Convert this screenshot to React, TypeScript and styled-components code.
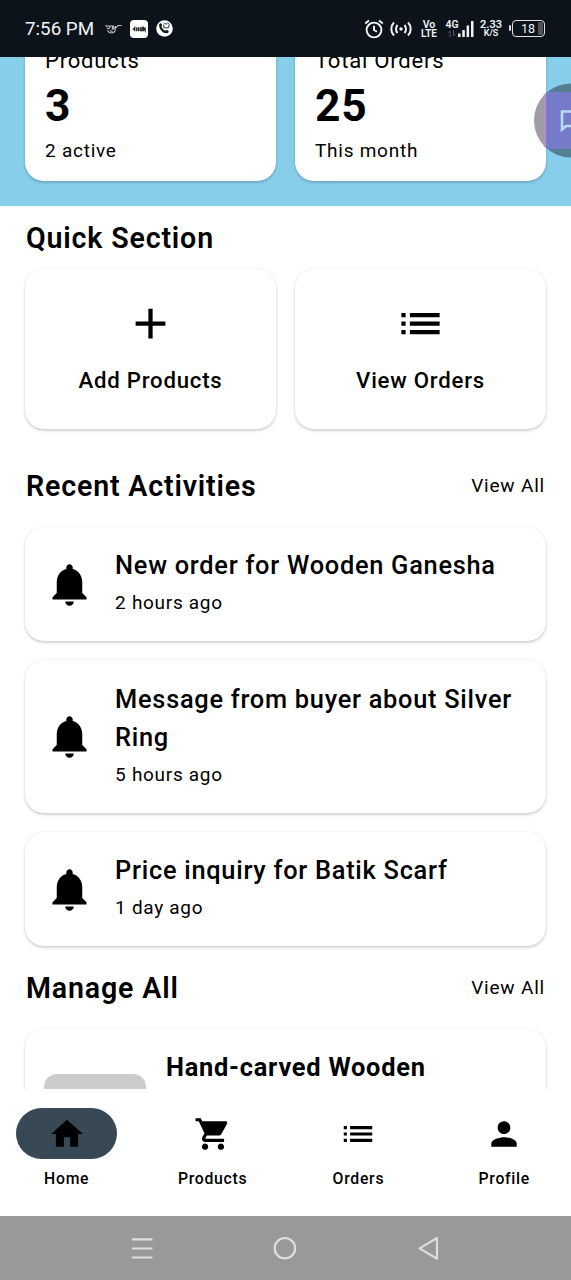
import React from 'react';
import styled, { createGlobalStyle } from 'styled-components';

const Global = createGlobalStyle`
  *, *::before, *::after { box-sizing: border-box; }
  html, body { margin: 0; padding: 0; }
  body { background: #fff; }
`;

const Screen = styled.div`
  width: 571px;
  height: 1280px;
  display: flex;
  flex-direction: column;
  position: relative;
  overflow: hidden;
  background: #fff;
  color: #000;
  font-family: Roboto, 'Liberation Sans', sans-serif;
`;

const StatusBar = styled.header`
  flex: none;
  height: 57px;
  padding: 0 26px 0 25px;
  display: flex;
  align-items: center;
  background: #0c131a;
  color: #f1f4f6;
`;

const Clock = styled.span`
  font-size: 18.8px;
  line-height: 22px;
  width: 80px;
  padding-top: 1px;
  white-space: nowrap;
`;

const StatusIcon = styled.svg<{ $gap?: number }>`
  flex: none;
  display: block;
  margin-left: ${(p) => p.$gap ?? 0}px;
`;

const Spacer = styled.div`
  flex: 1;
`;

const TinyStack = styled.div<{ $gap: number; $width: number }>`
  width: ${(p) => p.$width}px;
  margin-left: ${(p) => p.$gap}px;
  padding-top: 1px;
  display: flex;
  flex-direction: column;
  align-items: center;
  white-space: nowrap;
`;

const Tiny = styled.span<{ $size: number }>`
  font-size: ${(p) => p.$size}px;
  line-height: 9.5px;
  font-weight: 600;
`;

const Battery = styled.div`
  position: relative;
  width: 33px;
  height: 17px;
  margin-left: 10px;
  padding-left: 8px;
  display: flex;
  align-items: center;
  border: 1.5px solid #dfe2e4;
  border-radius: 4px;
  font-size: 12.5px;
  line-height: 14px;

  &::before {
    content: '';
    position: absolute;
    left: -4px;
    top: 4px;
    width: 2px;
    height: 6px;
    border-radius: 1px;
    background: #dfe2e4;
  }

  &::after {
    content: '';
    position: absolute;
    right: 1px;
    top: 1px;
    width: 5px;
    bottom: 1px;
    border-radius: 1px;
    background: #4c5258;
  }
`;

const Content = styled.main`
  flex: none;
  height: 1032px;
  overflow: hidden;
`;

const Summary = styled.section`
  height: 149px;
  padding: 0 25px 25px;
  display: flex;
  align-items: flex-end;
  gap: 19px;
  background: #87ceeb;
  overflow: hidden;
`;

const Card = styled.div`
  background: #fff;
  border-radius: 19px;
  box-shadow: 0 2px 3px rgba(0, 0, 0, 0.16), 0 0 3px rgba(0, 0, 0, 0.08);
`;

const StatCard = styled(Card)`
  flex: 1;
  height: 178px;
  padding: 0 20px 11px;
  display: flex;
  flex-direction: column;
  justify-content: flex-end;
`;

const StatLabel = styled.div`
  margin-bottom: 1px;
  font-size: 22.1px;
  line-height: 38px;
  letter-spacing: 0.75px;
`;

const StatValue = styled.div`
  font-size: 44.4px;
  line-height: 52px;
  font-weight: 700;
  letter-spacing: 0.8px;
`;

const StatNote = styled.div`
  font-size: 19px;
  line-height: 38px;
  letter-spacing: 0.75px;
`;

const SectionHead = styled.div<{ $top: number; $bottom: number }>`
  margin-top: ${(p) => p.$top}px;
  margin-bottom: ${(p) => p.$bottom}px;
  padding: 0 26px;
  height: 38px;
  display: flex;
  align-items: center;
  justify-content: space-between;
`;

const SectionTitle = styled.h2`
  margin: 0;
  font-size: 28.6px;
  line-height: 38px;
  font-weight: 600;
  letter-spacing: 0.83px;
`;

const SectionLink = styled.a`
  font-size: 19px;
  line-height: 38px;
  letter-spacing: 0.8px;
`;

const QuickRow = styled.div`
  padding: 0 25px;
  display: flex;
  gap: 19px;
`;

const QuickCard = styled(Card)`
  flex: 1;
  height: 160px;
  padding: 29px 0 30px;
  display: flex;
  flex-direction: column;
  align-items: center;
  justify-content: space-between;
`;

const QuickLabel = styled.div`
  font-size: 22.2px;
  line-height: 38px;
  font-weight: 500;
  letter-spacing: 0.77px;
`;

const ActivityList = styled.div`
  padding: 0 25px;
  display: flex;
  flex-direction: column;
  gap: 19.1px;
`;

const ActivityCard = styled(Card)`
  padding: 19.1px;
  display: flex;
  align-items: center;
  gap: 20px;
`;

const ActivityTitle = styled.div`
  font-size: 25.4px;
  line-height: 38.1px;
  font-weight: 500;
  letter-spacing: 0.72px;
`;

const ActivityTime = styled.div`
  font-size: 19px;
  line-height: 38.1px;
  letter-spacing: 0.7px;
`;

const ProductCard = styled(Card)`
  height: 180px;
  margin: 0 25px;
  padding: 19px;
  display: flex;
  gap: 20px;
`;

const Thumb = styled.div`
  width: 102px;
  height: 102px;
  margin-top: 26px;
  border-radius: 13px;
  background: #ccc;
`;

const ProductTitle = styled.div`
  font-size: 25.4px;
  line-height: 38px;
  font-weight: 700;
  letter-spacing: 0.75px;
`;

const TabBar = styled.nav`
  flex: none;
  height: 127px;
  padding: 19px 16px 0;
  display: flex;
  justify-content: space-between;
  background: #fff;
`;

const Tab = styled.div`
  width: 101.4px;
  display: flex;
  flex-direction: column;
  align-items: center;
`;

const TabPill = styled.div<{ $active?: boolean }>`
  width: 101.4px;
  height: 51px;
  display: flex;
  align-items: center;
  justify-content: center;
  border-radius: 26px;
  background: ${(p) => (p.$active ? '#384955' : 'transparent')};
`;

const TabLabel = styled.div`
  margin-top: 7px;
  font-size: 15.8px;
  line-height: 25px;
  font-weight: 500;
  letter-spacing: 0.7px;
`;

const SystemBar = styled.footer`
  flex: none;
  height: 64px;
  padding: 0 131px 0 130px;
  display: flex;
  align-items: center;
  justify-content: space-between;
  background: #999;
`;

const ChatBubble = styled.svg`
  position: absolute;
  left: 533px;
  top: 83px;
`;

const PATHS = {
  plus: 'M19 13h-6v6h-2v-6H5v-2h6V5h2v6h6v2z',
  list: 'M3 13h2v-2H3v2zm0 4h2v-2H3v2zm0-8h2V7H3v2zm4 4h14v-2H7v2zm0 4h14v-2H7v2zM7 7v2h14V7H7z',
  bell: 'M12 22c1.1 0 2-.9 2-2h-4c0 1.1.89 2 2 2zm6-6v-5c0-3.07-1.64-5.64-4.5-6.32V4c0-.83-.67-1.5-1.5-1.5s-1.5.67-1.5 1.5v.68C7.63 5.36 6 7.92 6 11v5l-2 2v1h16v-1l-2-2z',
  home: 'M10 20v-6h4v6h5v-8h3L12 3 2 12h3v8z',
  cart: 'M7 18c-1.1 0-1.99.9-1.99 2S5.9 22 7 22s2-.9 2-2-.9-2-2-2zM1 2v2h2l3.6 7.59-1.35 2.45c-.16.28-.25.61-.25.96 0 1.1.9 2 2 2h12v-2H7.42c-.14 0-.25-.11-.25-.25l.03-.12.9-1.63h7.45c.75 0 1.41-.41 1.75-1.03l3.58-6.49c.08-.14.12-.31.12-.48 0-.55-.45-1-1-1H5.21l-.94-2H1zm16 16c-1.1 0-1.99.9-1.99 2s.89 2 1.99 2 2-.9 2-2-.9-2-2-2z',
  person: 'M12 12c2.21 0 4-1.79 4-4s-1.79-4-4-4-4 1.79-4 4 1.79 4 4 4zm0 2c-2.67 0-8 1.34-8 4v2h16v-2c0-2.66-5.33-4-8-4z',
};

const Glyph = styled.svg`
  display: block;
  flex: none;
  fill: #000;
`;

const Icon = ({ name, size }: { name: keyof typeof PATHS; size: number }) => (
  <Glyph width={size} height={size} viewBox="0 0 24 24">
    <path d={PATHS[name]} />
  </Glyph>
);

const activities = [
  { title: 'New order for Wooden Ganesha', time: '2 hours ago' },
  { title: 'Message from buyer about Silver Ring', time: '5 hours ago' },
  { title: 'Price inquiry for Batik Scarf', time: '1 day ago' },
];

const tabs: { label: string; icon: keyof typeof PATHS }[] = [
  { label: 'Home', icon: 'home' },
  { label: 'Products', icon: 'cart' },
  { label: 'Orders', icon: 'list' },
  { label: 'Profile', icon: 'person' },
];

export default function App() {
  return (
    <Screen>
      <Global />
      <StatusBar>
        <Clock>7:56 PM</Clock>
        <StatusIcon width="17" height="12" viewBox="0 0 17 12" fill="none" stroke="#c3c8cc" strokeWidth="1.1">
          <path d="M.5 3c1-1 2 .2 1.500 1.200M3 3.200c1.500-.8 2.500.6 1.500 1.700S2 6 2.200 4.800M5.500 3.200c2-1 3 .5 2 1.700s.5 2 1.500 0M2.500 7.500c1.500 3 6 3.500 7.500.5L10.500 3M8.500 2.500L9 6M5 7.500l2.500 1M11 5l2-2.500H16.500" />
        </StatusIcon>
        <StatusIcon $gap={8} width="18" height="18" viewBox="0 0 18 18">
          <rect width="18" height="18" rx="4" fill="#fff" />
          <path d="M2.800 9.800l2-2.300v3.700M6.700 7.200v4M8.600 7.200v4M6.700 9.200h1.900M10.300 7.200v4M10.300 7.800h1.700v2.800h-1.700M13.300 11.200V7.500l1.800 3.200V7.200" fill="none" stroke="#222" strokeWidth="1.200" />
        </StatusIcon>
        <StatusIcon $gap={8} width="17" height="17" viewBox="0 0 17 17">
          <circle cx="8.500" cy="8.500" r="8.300" fill="#fff" />
          <path d="M3.200 4.500c.8-1.500 1.800-1.500 2.500-.3.700 1.300.3 1.700-.2 2.300.5 2 2 3.500 3.900 4.200.8-.8 1.500-.9 2.500-.2 1.200.8 1 1.700-.3 2.500C7.500 14.500 2.500 9 3.200 4.500z" fill="#141a20" />
          <path d="M7.800 4.500v3.300h4.700l.8-3.300M8.200 3.200l2 1 1.200-1.200 1.700 1.200" fill="none" stroke="#2b3036" strokeWidth="1" />
        </StatusIcon>
        <Spacer />
        <StatusIcon width="20" height="20" viewBox="0 0 20 20" fill="none" stroke="#f1f4f6" strokeWidth="1.900">
          <circle cx="10" cy="11" r="7.400" />
          <path d="M10 6.800V11l3 1.800M1.200 4.600L5 1.400M18.800 4.600L15 1.400" />
        </StatusIcon>
        <StatusIcon $gap={6} width="22" height="18" viewBox="0 0 22 18" fill="none" stroke="#f1f4f6" strokeWidth="2">
          <circle cx="11" cy="9" r="1.700" fill="#f1f4f6" stroke="none" />
          <path d="M7.500 5c-2 2.200-2 5.800 0 8M14.500 5c2 2.200 2 5.800 0 8M4 2.500C.4 6 .4 12 4 15.500M18 2.500c3.600 3.500 3.600 9.500 0 13" />
        </StatusIcon>
        <TinyStack $gap={8} $width={18}>
          <Tiny $size={10.5}>Vo</Tiny>
          <Tiny $size={10}>LTE</Tiny>
        </TinyStack>
        <TinyStack $gap={7} $width={14}>
          <Tiny $size={10.5}>4G</Tiny>
          <StatusIcon width="8" height="9" viewBox="0 0 8 9" fill="none" stroke="#565d63">
            <path d="M2 8V2L.5 3.500M5.500 1v6L7 5.500" />
          </StatusIcon>
        </TinyStack>
        <StatusIcon $gap={-2} width="18" height="18" viewBox="0 0 18 18" fill="#f1f4f6">
          <path d="M1 13.500h2.500V17H1zM5.300 10h2.500v7H5.300zM9.600 5.500h2.500V17H9.600zM14 1h2.500v16H14z" />
        </StatusIcon>
        <TinyStack $gap={5} $width={22}>
          <Tiny $size={11}>2.33</Tiny>
          <Tiny $size={9}>K/S</Tiny>
        </TinyStack>
        <Battery>18</Battery>
      </StatusBar>

      <Content>
        <Summary>
          <StatCard>
            <StatLabel>Products</StatLabel>
            <StatValue>3</StatValue>
            <StatNote>2 active</StatNote>
          </StatCard>
          <StatCard>
            <StatLabel>Total Orders</StatLabel>
            <StatValue>25</StatValue>
            <StatNote>This month</StatNote>
          </StatCard>
        </Summary>

        <SectionHead $top={13.2} $bottom={12}>
          <SectionTitle>Quick Section</SectionTitle>
        </SectionHead>
        <QuickRow>
          <QuickCard>
            <Icon name="plus" size={51} />
            <QuickLabel>Add Products</QuickLabel>
          </QuickCard>
          <QuickCard>
            <Icon name="list" size={51} />
            <QuickLabel>View Orders</QuickLabel>
          </QuickCard>
        </QuickRow>

        <SectionHead $top={37.8} $bottom={22}>
          <SectionTitle>Recent Activities</SectionTitle>
          <SectionLink>View All</SectionLink>
        </SectionHead>
        <ActivityList>
          {activities.map((a) => (
            <ActivityCard key={a.title}>
              <Icon name="bell" size={51} />
              <div>
                <ActivityTitle>{a.title}</ActivityTitle>
                <ActivityTime>{a.time}</ActivityTime>
              </div>
            </ActivityCard>
          ))}
        </ActivityList>

        <SectionHead $top={22.4} $bottom={21.9}>
          <SectionTitle>Manage All</SectionTitle>
          <SectionLink>View All</SectionLink>
        </SectionHead>
        <ProductCard>
          <Thumb />
          <ProductTitle>Hand-carved Wooden</ProductTitle>
        </ProductCard>
      </Content>

      <TabBar>
        {tabs.map((t, i) => (
          <Tab key={t.label}>
            <TabPill $active={i === 0}>
              <Icon name={t.icon} size={38} />
            </TabPill>
            <TabLabel>{t.label}</TabLabel>
          </Tab>
        ))}
      </TabBar>

      <SystemBar>
        <StatusIcon width="24" height="24" viewBox="0 0 24 24" stroke="#dedede" strokeWidth="2.200" fill="none">
          <path d="M1.800 3.300h20.600M1.800 12.500h20.600M1.800 21.500h20.600" />
        </StatusIcon>
        <StatusIcon width="24" height="24" viewBox="0 0 24 24" stroke="#dedede" strokeWidth="2.200" fill="none">
          <circle cx="11.900" cy="12.200" r="10.200" />
        </StatusIcon>
        <StatusIcon width="24" height="24" viewBox="0 0 24 24" stroke="#dedede" strokeWidth="2.200" fill="none" strokeLinejoin="round">
          <path d="M21 2v20.800L3.600 12.400z" />
        </StatusIcon>
      </SystemBar>

      <ChatBubble width="38" height="76" viewBox="0 0 38 76">
        <defs>
          <linearGradient id="edge" x1="0" x2="1" y1="0" y2="0">
            <stop offset="0" stopColor="#a596a8" />
            <stop offset="1" stopColor="#b58fd0" />
          </linearGradient>
        </defs>
        <circle cx="38" cy="37.500" r="37" fill="#000" fillOpacity=".38" />
        <path d="M13.500 9.500C10 12 9 16 9 20v35c0 4 1 8 4.500 11z" fill="url(#edge)" />
        <path d="M15 9H38V66H15L13 64.500V10.500z" fill="#767bc9" />
        <path d="M38 28.500H29V46.500L33 43H38" fill="none" stroke="#b9dcf5" strokeWidth="2.600" />
      </ChatBubble>
    </Screen>
  );
}
